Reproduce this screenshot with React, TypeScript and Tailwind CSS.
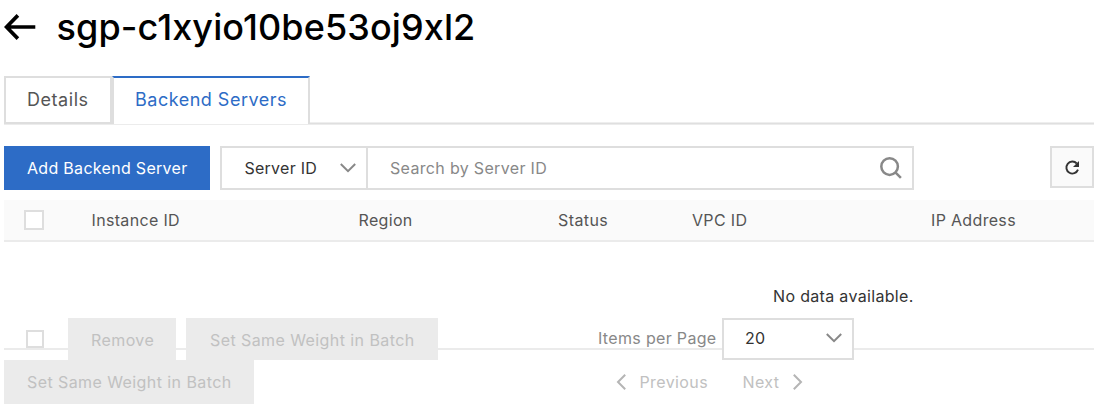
import type { ReactNode } from "react";

function Chevron({ className, d }: { className: string; d: string }) {
  return (
    <svg viewBox="0 0 16 16" className={className} fill="none" stroke="currentColor" strokeWidth="2">
      <path d={d} />
    </svg>
  );
}

function Checkbox({ className }: { className: string }) {
  return <span className={`shrink-0 border-2 border-[#dedede] bg-white ${className}`} />;
}

function DisabledButton({ className, children }: { className: string; children: ReactNode }) {
  return (
    <button disabled className={`flex shrink-0 items-center bg-[#ebebeb] tracking-[0.42px] text-[#c1c1c1] ${className}`}>
      {children}
    </button>
  );
}

export default function App() {
  return (
    <div className="h-[416px] w-[1114px] overflow-hidden bg-white pl-1 font-['Inter','Roboto',sans-serif] text-[16px] leading-6 tracking-[0.33px] text-[#333]">
      <div className="w-[1090px]">
        <header className="flex h-[76px] items-start pt-[7px] text-black">
          <svg viewBox="0 0 32 28" className="mt-[6px] h-7 w-8 shrink-0" fill="none" stroke="currentColor" strokeWidth="3.7">
            <path d="M13.9 2.4 2.5 14 13.9 25.6M2.5 14H31.3" />
          </svg>
          <h1 className="ml-[20.5px] text-[36px] leading-10 font-medium tracking-[0.1px] whitespace-nowrap">
            sgp-c1xyio10be53oj9xl2
          </h1>
        </header>

        <nav className="flex h-[49px] items-start border-b border-[#ececec] text-[18px] tracking-[0.55px]">
          <div className="flex h-12 w-[108px] items-center border-2 border-[#dedede] pl-[21px] text-[#555]">Details</div>
          <div className="flex h-12 w-[198px] items-center border-x-2 border-x-[#dedede] border-t-2 border-t-[#2d6cc6] pb-[2px] pl-[21px] tracking-[0.5px] text-[#2d6cc6]">
            Backend Servers
          </div>
          <div className="mt-[46px] h-[2px] flex-1 border-b border-[#dfdfdf] bg-[#eeeeee]" />
        </nav>

        <div className="mt-[21px] flex h-11 items-start">
          <button className="flex h-11 w-[206px] items-center bg-[#2d6cc6] pl-[23px] tracking-[0.3px] text-white">Add Backend Server</button>
          <div className="ml-[10px] flex h-11 w-[694px] border-2 border-[#dedede]">
            <div className="flex w-[146px] items-center justify-between border-r-2 border-[#dedede] pr-[10px] pl-[22.5px] tracking-[0.25px]">
              Server ID
              <Chevron className="h-4 w-4 text-[#888]" d="M.8 4 8 11.2 15.2 4" />
            </div>
            <div className="flex flex-1 items-center justify-between pr-[9px] pl-[22px] text-[#888]">
              Search by Server ID
              <svg viewBox="0 0 24 24" className="h-6 w-6" fill="none" stroke="currentColor" strokeWidth="2.5">
                <circle cx="10.6" cy="10.6" r="8.3" />
                <path d="m16.4 16.4 5.5 5.5" />
              </svg>
            </div>
          </div>
          <button className="ml-auto flex h-[42px] w-11 items-center justify-center border-2 border-[#dedede] bg-[#fafafa]">
            <svg viewBox="0 0 16 16" className="mt-[2px] h-4 w-4">
              <path d="M12.8 3.5A6 6 0 1 0 14 9.7" fill="none" stroke="#333" strokeWidth="1.9" />
              <path d="M15 1v6H9z" fill="#333" />
            </svg>
          </button>
        </div>

        <div className="mt-[10px] flex h-[42px] items-center border-b-2 border-[#ebebeb] bg-[#fafafa] text-[#555]">
          <div className="flex w-[87.5px] pl-5"><Checkbox className="h-5 w-5" /></div>
          <div className="w-[267px]">Instance ID</div>
          <div className="w-[199.5px]">Region</div>
          <div className="w-[134px] tracking-[0.4px]">Status</div>
          <div className="w-[239px]">VPC ID</div>
          <div>IP Address</div>
        </div>
        <div className="h-[108px] border-b-2 border-[#ebebeb] pt-[42px] pl-[769px] whitespace-nowrap">No data available.</div>

        <footer className="relative -mt-8 flex items-start whitespace-nowrap">
          <div className="w-[594px]">
            <div className="flex h-[42px] items-start">
              <Checkbox className="mt-3 ml-[22px] h-[18px] w-[18px]" />
              <DisabledButton className="ml-6 h-[42px] w-[108px] pt-[2px] pl-[23px]">Remove</DisabledButton>
              <DisabledButton className="ml-[10px] h-[42px] w-[252px] pt-[2px] pl-[24px]">Set Same Weight in Batch</DisabledButton>
            </div>
            <DisabledButton className="h-11 w-[250px] pl-[23px]">Set Same Weight in Batch</DisabledButton>
          </div>
          <div>
            <div className="flex h-[42px] items-center text-[#888]">
              <span className="w-[124px] pb-[2px]">Items per Page</span>
              <div className="flex h-[42px] w-[132px] items-center justify-between border-2 border-[#dedede] bg-white pr-[10px] pb-[2px] pl-[21px] text-[#333]">
                20
                <Chevron className="h-4 w-4 text-[#888]" d="M.8 4 8 11.2 15.2 4" />
              </div>
            </div>
            <div className="flex h-11 items-center tracking-[0.4px] text-[#c1c1c1]">
              <Chevron className="ml-[15.5px] h-4 w-4 text-[#b5b5b5]" d="M11.2.8 4 8l7.2 7.2" />
              <span className="ml-[10px] w-[103px]">Previous</span>
              <span className="w-[46px]">Next</span>
              <Chevron className="h-4 w-4 text-[#b5b5b5]" d="m4.8.8 7.2 7.2-7.2 7.2" />
            </div>
          </div>
        </footer>
      </div>
    </div>
  );
}
